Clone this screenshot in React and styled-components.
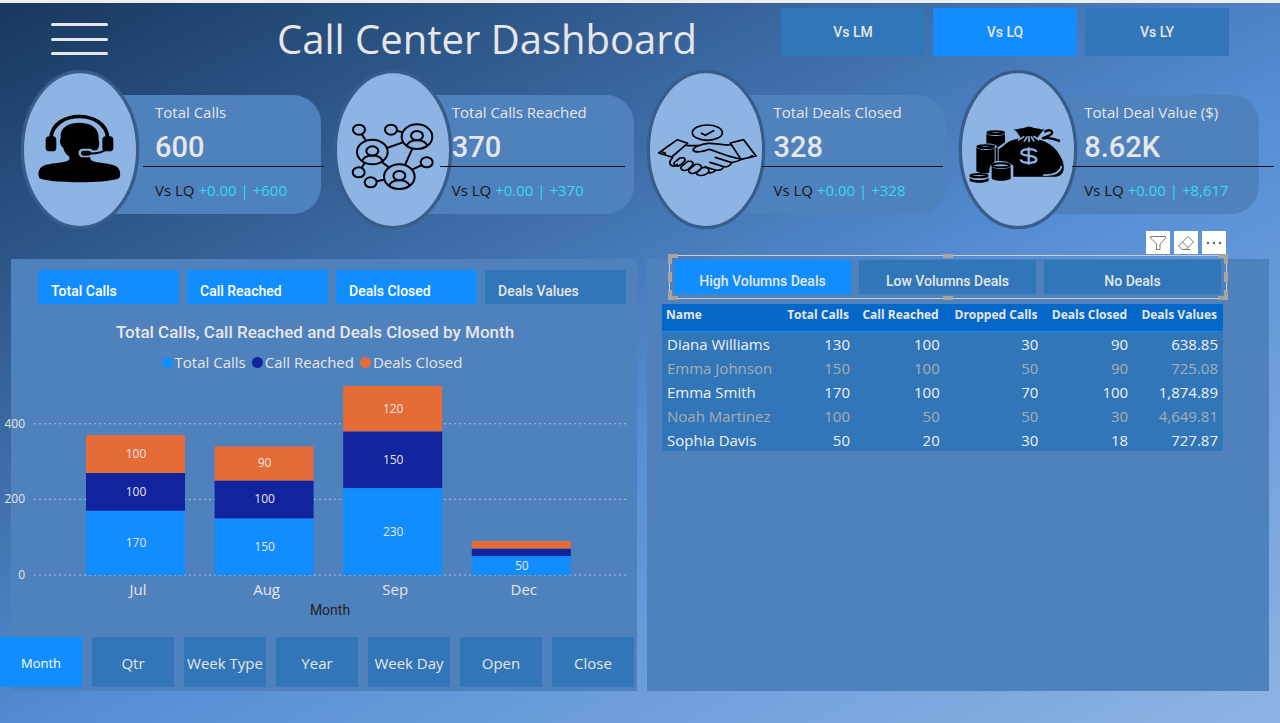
import React from "react";
import styled, { createGlobalStyle } from "styled-components";

const ui = `"Open Sans", "Noto Sans", sans-serif`;
const din = `Roboto, "Liberation Sans", sans-serif`;

const color = {
  text: "#e6e6e6",
  accent: "#118dff",
  button: "#3176b8",
  panel: "#4f81bd",
  badge: "#8eb4e3",
  badgeEdge: "#385d8a",
  navy: "#12239e",
  orange: "#e66c37",
  cyan: "#33dbf0",
};

const GlobalStyle = createGlobalStyle`
  *, *::before, *::after { box-sizing: border-box; }
  body { margin: 0; font-family: ${ui}; color: ${color.text}; }
  button { border: 0; margin: 0; padding: 0; font: inherit; color: inherit; cursor: pointer; }
`;

const Page = styled.div`
  min-height: 100vh;
  border-top: 3px solid #eeeeee;
  background: linear-gradient(153deg, #17375e 0%, #558ed5 55%, #8eb4e3 100%) border-box;
`;

const Header = styled.header`
  display: flex;
  align-items: center;
  height: 68px;
  padding: 0 51px;
`;

const MenuButton = styled.button`
  display: flex;
  flex-direction: column;
  justify-content: space-between;
  width: 57px;
  height: 32px;
  margin-top: 4px;
  background: none;
  flex: none;
`;

const MenuLine = styled.span`
  height: 3px;
  border-radius: 2px;
  background: ${color.text};
`;

const Title = styled.h1`
  margin: 4px 0 0 169px;
  font-size: 40px;
  line-height: 60px;
  font-weight: 400;
  white-space: nowrap;
`;

const CompareTabs = styled.nav`
  display: grid;
  grid-template-columns: repeat(3, 1fr);
  gap: 8px;
  width: 448px;
  margin-left: auto;
  align-self: flex-start;
  padding-top: 5px;
`;

const Tab = styled.button`
  height: ${(p) => p.$height}px;
  padding: ${(p) => p.$padding || "0"};
  background: ${(p) => (p.$active ? color.accent : color.button)};
  color: ${(p) => (p.$bright ? "#ffffff" : color.text)};
  font-family: ${(p) => (p.$plain ? ui : din)};
  font-size: ${(p) => p.$size || 14}px;
  font-weight: ${(p) => (p.$plain ? 400 : 500)};
  text-align: ${(p) => p.$align || "center"};
  white-space: nowrap;
`;

const Cards = styled.section`
  display: grid;
  grid-template-columns: repeat(4, minmax(0, 1fr));
  gap: 13px;
  padding: 0 21px;
`;

const Card = styled.article`
  display: grid;
  grid-template-areas: "stack";
  grid-template-columns: minmax(0, 1fr);
  align-items: center;
  height: 158px;
  > * { grid-area: stack; }
`;

const Plate = styled.div`
  height: 119px;
  margin: 8px 0 0 59px;
  border-radius: 0 28px 28px 0;
  background: ${color.panel};
`;

const Badge = styled.svg`
  width: 118px;
  height: 158px;
  overflow: visible;
`;

const Metric = styled.div`
  width: ${(p) => p.$rule}px;
  margin: 2px 0 0 ${(p) => p.$indent}px;
`;

const MetricName = styled.div`
  padding-left: 12px;
  font-size: 15px;
  line-height: 24px;
`;

const MetricValue = styled.div`
  padding: 4px 0 0 12px;
  border-bottom: 1px solid #111111;
  font-family: ${din};
  font-size: 29px;
  line-height: 38px;
  font-weight: 500;
`;

const MetricDelta = styled.div`
  padding: 11px 0 0 12px;
  font-size: 15px;
  line-height: 24px;
  color: ${color.cyan};
  white-space: nowrap;
`;

const Dark = styled.span`
  color: #161616;
`;

const Panels = styled.main`
  display: grid;
  grid-template-columns: 626fr 622fr;
  gap: 10px;
  padding: 30px 11px 32px;
`;

const Panel = styled.section`
  min-height: 432px;
  min-width: 0;
  background: ${color.panel};
`;

const MeasureTabs = styled.div`
  display: grid;
  grid-template-columns: repeat(4, 1fr);
  gap: 8px;
  padding: 11px 11px 0 27px;
`;

const ChartTitle = styled.h2`
  margin: 16px 0 0;
  padding-right: 18px;
  font-family: ${din};
  font-size: 17px;
  line-height: 24px;
  font-weight: 500;
  text-align: center;
`;

const Legend = styled.ul`
  display: flex;
  justify-content: center;
  gap: 6px;
  margin: 6px 0 1px;
  padding: 0 24px 0 0;
  list-style: none;
  font-size: 15px;
  line-height: 24px;
`;

const LegendItem = styled.li`
  display: flex;
  align-items: center;
  gap: 2px;
  &::before {
    content: "";
    width: 11px;
    height: 11px;
    border-radius: 50%;
    background: ${(p) => p.$color};
  }
`;

const Chart = styled.svg`
  display: block;
  width: calc(100% + 11px);
  margin-left: -11px;
  font-family: ${ui};
  font-size: 15px;
  fill: ${color.text};
`;

const PeriodTabs = styled.div`
  display: grid;
  grid-template-columns: repeat(7, 1fr);
  gap: 10px;
  margin: 12px 3px 0 -11px;
`;

const Selection = styled.div`
  position: relative;
  display: grid;
  grid-template-columns: repeat(3, 1fr);
  gap: 8px;
  margin: -4px 42px 0 22px;
  padding: 4px 5px 4px 4px;
  border: 1px solid #d0cdc9;
`;

const Handle = styled.i`
  position: absolute;
  background: #a9a49f;
  ${(p) => (p.$wide ? "width: 10px; height: 4px;" : "width: 4px; height: 10px;")}
  ${(p) => p.$at}
`;

const VisualActions = styled.div`
  position: absolute;
  right: 0;
  bottom: 100%;
  display: flex;
  gap: 4px;
  padding-bottom: 2px;
`;

const Action = styled.button`
  display: grid;
  place-items: center;
  width: 24px;
  height: 23px;
  background: #ffffff;
`;

const ActionIcon = styled.svg`
  width: 18px;
  height: 18px;
  fill: none;
  stroke: #777777;
  stroke-width: 1;
`;

const TableWrap = styled.div`
  padding: 5px 46px 0 15px;
`;

const Table = styled.table`
  width: 100%;
  table-layout: fixed;
  border-collapse: collapse;
  background: ${color.button};
  font-size: 15px;
`;

const HeadCell = styled.th`
  width: ${(p) => p.$width};
  height: 27px;
  padding: 1px 6px 0 4px;
  background: #0568c8;
  border-bottom: 1px solid ${color.accent};
  font-size: 12px;
  line-height: 20px;
  font-weight: 700;
  text-align: ${(p) => (p.$first ? "left" : "right")};
  vertical-align: top;
  white-space: nowrap;
`;

const Row = styled.tr`
  color: ${(p) => (p.$muted ? "#a9adb3" : "#f0f0f0")};
  & + & td { border-top: 1px solid #54669f; }
`;

const Cell = styled.td`
  height: 24px;
  padding: 2px 5px 0;
  line-height: 21px;
  text-align: right;
  white-space: nowrap;
  &:first-child { text-align: left; }
`;

function AgentIcon() {
  return (
    <g transform="translate(-63 -213)">
      <path d="M153 414C158 328 318 328 323 414" fill="none" stroke="#000" strokeWidth="11" />
      <rect x="137" y="409" width="32" height="45" rx="11" />
      <path d="M182 402C186 379 210 368 238 368S290 379 295 402C297 412 294 418 298 428C298 446 288 458 271 470V478C278 489 322 489 342 496C360 503 364 520 358 534C330 551 146 551 118 534C112 520 116 503 134 496C154 489 204 489 208 478V470C197 463 192 454 190 444C180 436 178 424 182 414Z" />
      <path d="M248 459H268" fill="none" stroke={color.badge} strokeWidth="25" strokeLinecap="round" />
      <path d="M268 460C284 461 294 459 304 455" fill="none" stroke={color.badge} strokeWidth="17" />
      <path d="M268 460C290 461 306 457 320 448" fill="none" stroke="#000" strokeWidth="6" />
      <rect x="243" y="452" width="30" height="15" rx="7" />
      <rect x="307" y="409" width="33" height="45" rx="11" />
    </g>
  );
}

const people = [[276, 230], [142, 276], [223, 350]];
const nodes = [[102, 209], [198, 209], [101, 337], [137, 367], [305, 307]];

function NetworkIcon() {
  return (
    <g transform="translate(-27 -33)" fill="none" stroke="#000" strokeWidth="6">
      {people.map(([x, y]) => (
        <g key={x}>
          <ellipse cx={x} cy={y} rx="46" ry="37" />
          <ellipse cx={x} cy={y - 3} rx="18" ry="14" />
          <path d={`M${x - 31} ${y + 27}C${x - 22} ${y + 5} ${x + 22} ${y + 5} ${x + 31} ${y + 27}`} />
        </g>
      ))}
      {nodes.map(([x, y]) => (
        <ellipse key={x} cx={x} cy={y} rx="18" ry="15" />
      ))}
      <path d="M110 223L124 243M215 212L232 217M186 264L233 247M262 266L240 315M168 304L194 324M119 309L110 323M154 364L178 359M261 329L289 316" />
    </g>
  );
}

function HandshakeIcon() {
  return (
    <g transform="translate(-21 -33)" fill="none" stroke="#000" strokeWidth="5" strokeLinejoin="round" strokeLinecap="round">
      <ellipse cx="202" cy="218" rx="45" ry="23" />
      <path d="M184 220L196 226L221 212" />
      <path d="M56 279L112 239L143 250L95 291ZM67 276L76 280M271 249L311 239L348 288L303 298ZM337 287L330 291" />
      <path d="M142 257H174M271 255C245 255 225 249 205 250C186 251 160 262 159 270C164 279 190 276 207 268C225 272 246 286 300 297" />
      <path d="M98 293C86 303 87 315 98 318C103 320 108 317 112 313M120 294C137 291 139 299 130 307L121 315C111 322 98 316 103 307ZM143 304C158 302 164 309 154 319L144 328C132 336 118 328 124 320ZM166 313C180 311 190 319 180 328L169 337C156 345 141 337 148 328ZM187 323C204 319 213 331 201 341C188 350 168 347 170 339Z" />
      <path d="M303 299C294 305 280 306 275 308C272 319 258 321 251 320C249 329 237 332 228 330C222 337 211 339 204 338M226 292L275 308M210 307L251 320M195 320L228 331" />
    </g>
  );
}

function MoneyIcon() {
  return (
    <g transform="translate(-30 -33)">
      <path d="M112 222C125 230 155 230 168 222V247L147 262C138 251 124 250 112 251Z" />
      <ellipse cx="140" cy="218" rx="25" ry="4" fill="none" stroke="#000" strokeWidth="6" />
      <path d="M82 264C97 272 125 272 137 264V306C128 309 120 319 121 338C108 341 91 340 82 334Z" />
      <ellipse cx="110" cy="260" rx="25" ry="4" fill={color.badge} stroke="#000" strokeWidth="6" />
      <path d="M143 262V303" stroke="#000" strokeWidth="6" />
      <path d="M128 321C142 329 170 329 185 321V356C171 364 142 364 128 356Z" />
      <ellipse cx="156" cy="316" rx="27" ry="6" fill={color.badge} stroke="#000" strokeWidth="6" />
      <ellipse cx="90" cy="347" rx="26" ry="5" fill={color.badge} stroke="#000" strokeWidth="6" />
      <path d="M62 354C78 363 104 363 119 354V363C104 370 78 370 62 363Z" />
      <path d="M160 260C180 239 204 233 239 235C286 235 323 258 340 301C350 327 343 350 318 350H193V318C184 305 163 303 149 303V268Z" />
      <path d="M193 207C204 211 211 203 222 205C234 198 247 199 257 205C269 203 276 211 287 207C274 219 268 230 262 238H216C212 225 204 215 193 207Z" />
      <path d="M286 216C304 204 319 217 302 226L279 236M284 235C303 229 316 240 333 243" fill="none" stroke="#000" strokeWidth="7" />
      <path d="M207 241L226 229M225 245L235 229M240 247V229M255 244L246 229M271 240L253 229M282 345C309 347 332 339 338 318" fill="none" stroke={color.badge} strokeWidth="5" />
      <path d="M262 276C260 266 217 263 217 278C217 291 262 283 262 299C262 313 217 311 215 298M239 262V314" fill="none" stroke={color.badge} strokeWidth="7" />
    </g>
  );
}

const metrics = [
  { name: "Total Calls", value: "600", delta: "+0.00 | +600", indent: 122, rule: 181, Icon: AgentIcon },
  { name: "Total Calls Reached", value: "370", delta: "+0.00 | +370", indent: 106, rule: 185, Icon: NetworkIcon },
  { name: "Total Deals Closed", value: "328", delta: "+0.00 | +328", indent: 115, rule: 181, Icon: HandshakeIcon },
  { name: "Total Deal Value ($)", value: "8.62K", delta: "+0.00 | +8,617", indent: 113, rule: 202, Icon: MoneyIcon },
];

function MetricCard({ name, value, delta, indent, rule, Icon }) {
  return (
    <Card>
      <Plate />
      <Badge viewBox="0 0 354 474" aria-hidden="true">
        <ellipse cx="177" cy="236" rx="173" ry="234" fill={color.badge} stroke={color.badgeEdge} strokeWidth="10" />
        <Icon />
      </Badge>
      <Metric $indent={indent} $rule={rule}>
        <MetricName>{name}</MetricName>
        <MetricValue>{value}</MetricValue>
        <MetricDelta><Dark>Vs LQ</Dark> {delta}</MetricDelta>
      </Metric>
    </Card>
  );
}

const series = [
  { name: "Total Calls", color: color.accent },
  { name: "Call Reached", color: color.navy },
  { name: "Deals Closed", color: color.orange },
];

const months = [
  { month: "Jul", values: [170, 100, 100] },
  { month: "Aug", values: [150, 100, 90] },
  { month: "Sep", values: [230, 150, 120] },
  { month: "Dec", values: [50, 20, 20] },
];

const BASE = 200;
const UNIT = 0.378;

function StackedBars() {
  return (
    <Chart viewBox="0 0 637 250" role="img" aria-label="Calls and deals by month">
      {[0, 200, 400].map((tick) => (
        <g key={tick}>
          <line x1="34" x2="626" y1={BASE - tick * UNIT} y2={BASE - tick * UNIT} stroke="#a9bfdc" strokeDasharray="2 3" />
          <text x="25" y={BASE + 4 - tick * UNIT} fontSize="12" textAnchor="end">{tick}</text>
        </g>
      ))}
      {months.map(({ month, values }, i) => {
        const x = 86 + i * 128.6;
        let total = 0;
        return (
          <g key={month}>
            {values.map((value, s) => {
              total += value;
              const y = BASE - total * UNIT;
              return (
                <g key={s}>
                  <rect x={x} y={y} width="99" height={value * UNIT} fill={series[s].color} />
                  {value >= 50 && (
                    <text x={x + 50} y={y + (value * UNIT) / 2 + 4} fontSize="12" textAnchor="middle">{value}</text>
                  )}
                </g>
              );
            })}
            <text x={x + 52} y={BASE + 20} textAnchor="middle">{month}</text>
          </g>
        );
      })}
      <text x="330" y={BASE + 40} fill="#252423" fontFamily="Roboto, sans-serif" fontSize="14" textAnchor="middle">Month</text>
    </Chart>
  );
}

const columns = [
  { label: "Name", width: "21%" },
  { label: "Total Calls", width: "13.4%" },
  { label: "Call Reached", width: "16%" },
  { label: "Dropped Calls", width: "17.6%" },
  { label: "Deals Closed", width: "16%" },
  { label: "Deals Values", width: "16%" },
];

const agents = [
  ["Diana Williams", "130", "100", "30", "90", "638.85"],
  ["Emma Johnson", "150", "100", "50", "90", "725.08"],
  ["Emma Smith", "170", "100", "70", "100", "1,874.89"],
  ["Noah Martinez", "100", "50", "50", "30", "4,649.81"],
  ["Sophia Davis", "50", "20", "30", "18", "727.87"],
];

const handles = [
  [true, "top: -2px; left: -2px;"], [false, "top: -2px; left: -2px;"],
  [true, "top: -2px; right: -2px;"], [false, "top: -2px; right: -2px;"],
  [true, "bottom: -2px; left: -2px;"], [false, "bottom: -2px; left: -2px;"],
  [true, "bottom: -2px; right: -2px;"], [false, "bottom: -2px; right: -2px;"],
  [true, "top: -2px; left: calc(50% - 5px);"], [true, "bottom: -2px; left: calc(50% - 5px);"],
  [false, "left: -2px; top: calc(50% - 5px);"], [false, "right: -2px; top: calc(50% - 5px);"],
];

export default function App() {
  return (
    <Page>
      <GlobalStyle />
      <Header>
        <MenuButton aria-label="Menu"><MenuLine /><MenuLine /><MenuLine /></MenuButton>
        <Title>Call Center Dashboard</Title>
        <CompareTabs>
          {["Vs LM", "Vs LQ", "Vs LY"].map((t) => (
            <Tab key={t} $height={48} $active={t === "Vs LQ"}>{t}</Tab>
          ))}
        </CompareTabs>
      </Header>
      <Cards>
        {metrics.map((m) => <MetricCard key={m.name} {...m} />)}
      </Cards>
      <Panels>
        <Panel>
          <MeasureTabs>
            {["Total Calls", "Call Reached", "Deals Closed", "Deals Values"].map((t) => (
              <Tab key={t} $height={34} $align="left" $padding="8px 0 0 13px" $active={t !== "Deals Values"} $bright={t !== "Deals Values"}>{t}</Tab>
            ))}
          </MeasureTabs>
          <ChartTitle>Total Calls, Call Reached and Deals Closed by Month</ChartTitle>
          <Legend>
            {series.map((s) => <LegendItem key={s.name} $color={s.color}>{s.name}</LegendItem>)}
          </Legend>
          <StackedBars />
          <PeriodTabs>
            {["Month", "Qtr", "Week Type", "Year", "Week Day", "Open", "Close"].map((t) => (
              <Tab key={t} $height={50} $plain $padding="2px 0 0" $size={t === "Month" ? 13 : 15} $active={t === "Month"} $bright={t === "Month"}>{t}</Tab>
            ))}
          </PeriodTabs>
        </Panel>
        <Panel>
          <Selection>
            {["High Volumns Deals", "Low Volumns Deals", "No Deals"].map((t, i) => (
              <Tab key={t} $height={34} $padding="8px 0 0" $active={i === 0}>{t}</Tab>
            ))}
            {handles.map(([wide, at], i) => <Handle key={i} $wide={wide} $at={at} />)}
            <VisualActions>
              <Action aria-label="Filters">
                <ActionIcon viewBox="0 0 18 18"><path d="M1.5 2.5H16.5V4L11 10V15.5H7.5V10L1.5 4Z" /></ActionIcon>
              </Action>
              <Action aria-label="Clear selections">
                <ActionIcon viewBox="0 0 18 18"><path d="M11 2.5L16.5 8L9 15.5H5L1.5 12ZM5.500 8L11 13.500M5 15.500H13" /></ActionIcon>
              </Action>
              <Action aria-label="More options">
                <ActionIcon viewBox="0 0 18 18">
                  {[3, 9, 15].map((x) => <circle key={x} cx={x} cy="9" r="1" fill="#555" stroke="#555" strokeWidth="0.5" />)}
                </ActionIcon>
              </Action>
            </VisualActions>
          </Selection>
          <TableWrap>
            <Table>
              <thead>
                <tr>
                  {columns.map(({ label, width }, i) => (
                    <HeadCell key={label} $first={i === 0} $width={width} scope="col">{label}</HeadCell>
                  ))}
                </tr>
              </thead>
              <tbody>
                {agents.map((row, i) => (
                  <Row key={row[0]} $muted={i % 2 === 1}>
                    {row.map((v, j) => <Cell key={j}>{v}</Cell>)}
                  </Row>
                ))}
              </tbody>
            </Table>
          </TableWrap>
        </Panel>
      </Panels>
    </Page>
  );
}
